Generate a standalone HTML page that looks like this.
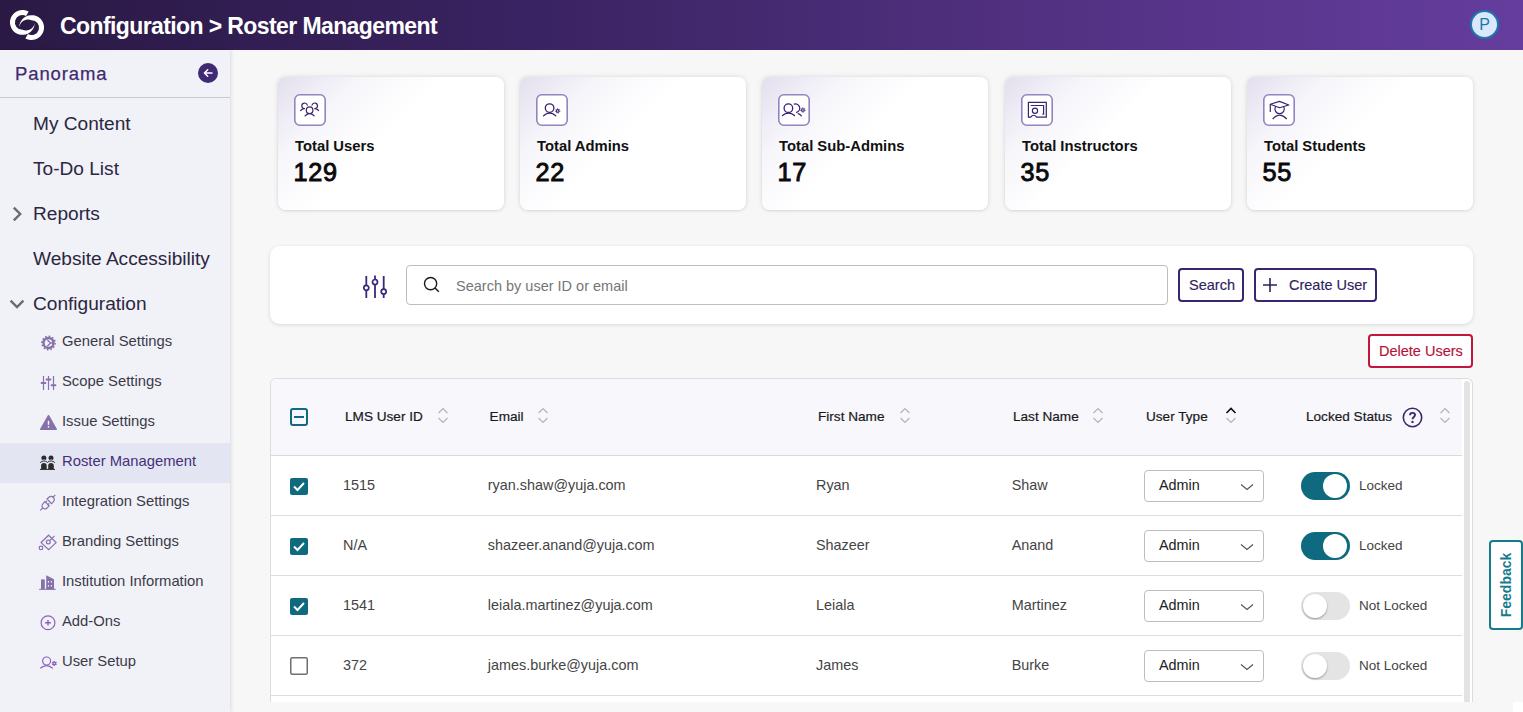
<!DOCTYPE html>
<html><head><meta charset="utf-8"><title>Roster Management</title>
<style>
*{box-sizing:border-box;margin:0;padding:0}
html,body{width:1523px;height:712px;overflow:hidden}
body{font-family:"Liberation Sans",sans-serif;background:#f7f7f7;position:relative;color:#222}
.abs{position:absolute}
.ico{position:absolute;overflow:visible}
#hdr{left:0;top:0;width:1523px;height:50px;background:linear-gradient(90deg,#2a1944 0%,#3a2362 35%,#50307f 66%,#653d9e 100%)}
#hdr .title{left:60px;top:12px;font-size:23px;font-weight:bold;color:#fff;white-space:nowrap;line-height:28px;letter-spacing:-0.6px}
#avatar{left:1470px;top:10px;width:29px;height:29px;border-radius:50%;background:#dbe8fb;border:2px solid #1b78ad;color:#1b78ad;font-size:16px;text-align:center;line-height:25px}
#side{left:0;top:50px;width:230px;height:662px;background:#f1f1f8;box-shadow:1px 0 4px rgba(0,0,0,0.12)}
.sb{position:absolute;white-space:nowrap;line-height:1}
.main{left:33px;font-size:19.1px;color:#2b2740}
.sub{left:62px;font-size:14.8px;color:#3b3a48}
.card{position:absolute;top:77px;width:226px;height:133px;border-radius:8px;background:linear-gradient(135deg,#e3dfee 0%,#f6f5fa 22%,#ffffff 45%);box-shadow:0 0 5px rgba(0,0,0,0.13),0 1px 2px rgba(0,0,0,0.06)}
.card .ib{position:absolute;left:16px;top:17px;width:32px;height:32px}
.card .ib svg{position:absolute;left:0;top:0}
.card .lbl{position:absolute;left:17px;top:60px;font-size:14.8px;font-weight:bold;color:#111;white-space:nowrap;line-height:18px}
.card .num{position:absolute;left:15.5px;top:81px;font-size:25.3px;letter-spacing:0.7px;font-weight:normal;-webkit-text-stroke:0.9px #0a0a0a;color:#0a0a0a;line-height:28px}
#panel{left:270px;top:246px;width:1203px;height:78px;background:#fff;border-radius:10px;box-shadow:0 1px 4px rgba(0,0,0,0.12)}
#search{left:406px;top:265px;width:762px;height:40px;border:1px solid #bdbdbd;border-radius:4px;background:#fff}
#search .ph{position:absolute;left:49px;top:10.5px;font-size:14.5px;color:#767676;white-space:nowrap;line-height:18px}
.btn{position:absolute;height:34px;border:2px solid #3a2670;border-radius:4px;background:#fff;color:#30245f;font-size:14.5px;line-height:31.5px;-webkit-text-stroke:0.15px currentColor;white-space:nowrap}
#tbl{left:270px;top:378px;width:1203px;height:324px;background:#fff;border:1px solid #dcdcdc;border-bottom:none;border-radius:6px 6px 0 0;overflow:hidden}
#thead{left:0;top:0;width:1191px;height:77px;background:#f7f7fc;border-bottom:1px solid #d9d9d9}
.th{position:absolute;top:30px;font-size:13.6px;color:#1a1a1a;-webkit-text-stroke:0.2px #1a1a1a;white-space:nowrap;line-height:16px}
.row{position:absolute;left:0;width:1191px;height:60px;border-bottom:1px solid #dedede}
.td{position:absolute;top:21px;font-size:14.4px;color:#444;white-space:nowrap;line-height:16px}
.dd{position:absolute;left:873px;top:14px;width:120px;height:32px;border:1px solid #bdbdbd;border-radius:4px;background:#fff}
.dd span{position:absolute;left:14px;top:6px;font-size:14.4px;color:#222;line-height:16px}
.tg{position:absolute;left:1030px;top:16px;width:49px;height:28px;border-radius:14px}
.tg.on{background:#0f6a80}
.tg.off{background:#e4e4e4}
.knob{position:absolute;top:2px;width:24px;height:24px;border-radius:50%;background:#fff}
.tg.on .knob{left:21.5px}
.tg.off .knob{left:2px;box-shadow:0 1px 2px rgba(0,0,0,0.35)}
.lk{position:absolute;left:1088px;top:22px;font-size:13.5px;color:#444;line-height:16px;white-space:nowrap}
#scroll{left:1193px;top:2px;width:6px;height:330px;background:#e3e3e3;border-radius:3px}
#fb{left:1489px;top:540px;width:34px;height:90px;border:2px solid #157a8c;border-radius:4px;background:#fff}
#fb span{position:absolute;left:50%;top:50%;transform:translate(-50%,-50%) rotate(-90deg);font-size:14px;font-weight:bold;color:#157a8c;white-space:nowrap}
</style></head>
<body>
<div id="hdr" class="abs">
<svg class="ico" style="left:0;top:0" width="50" height="50" viewBox="0 0 50 50">
<path id="lg" d="M28.6 11.62 A12.45 12.45 0 1 0 34.85 22.4 A9 9 0 0 1 22.4 29.85 A7.45 7.45 0 1 1 26.1 15.95 Z" fill="#fff"/>
<path d="M28.6 11.62 A12.45 12.45 0 1 0 34.85 22.4 A9 9 0 0 1 22.4 29.85 A7.45 7.45 0 1 1 26.1 15.95 Z" fill="#fff" transform="rotate(180 27 25)"/>
</svg>
<div class="abs title">Configuration &gt; Roster Management</div>
<div id="avatar" class="abs">P</div>
</div>
<div id="side" class="abs">
<div class="sb" style="left:15px;top:15px;font-size:18.5px;color:#3f2b6e;letter-spacing:0.9px;-webkit-text-stroke:0.25px #3f2b6e">Panorama</div>
<div class="abs" style="left:197.5px;top:12.5px;width:20px;height:20px;border-radius:50%;background:#3f2a73">
<svg width="20" height="20" viewBox="0 0 20 20"><path d="M14 10 H6.4 M9.7 6.7 L6.4 10 L9.7 13.3" fill="none" stroke="#fff" stroke-width="1.5" stroke-linecap="round" stroke-linejoin="round"/></svg>
</div>
<div class="abs" style="left:0;top:47px;width:230px;height:1px;background:#c9c8da"></div>
</div>
<div class="sb main" style="top:114.3px">My Content</div>
<div class="sb main" style="top:158.5px">To-Do List</div>
<div class="sb main" style="top:203.7px">Reports</div>
<div class="sb main" style="top:248.6px">Website Accessibility</div>
<div class="sb main" style="top:294.1px">Configuration</div>
<svg class="ico" style="left:11px;top:206px" width="12" height="16" viewBox="0 0 12 16"><path d="M2.8 1.6 L9.2 8 L2.8 14.4" fill="none" stroke="#6b6b6b" stroke-width="2.4"/></svg>
<svg class="ico" style="left:9px;top:298px" width="16" height="12" viewBox="0 0 16 12"><path d="M1.6 2.6 L8 9 L14.4 2.6" fill="none" stroke="#6b6b6b" stroke-width="2.4"/></svg>
<div class="abs" style="left:0;top:443px;width:230px;height:40px;background:#e3e5f3"></div>
<svg class="ico" style="left:36px;top:330px" width="24" height="24" viewBox="0 0 24 24"><g fill="none" stroke="#8672aa"><circle cx="12.5" cy="13" r="5" stroke-width="2.4"/><circle cx="12.5" cy="13" r="6.6" stroke-width="1.6" stroke-dasharray="1.6 1.85"/></g><path d="M11.3 9.8 L14.5 13 L11.3 16.2 M14.5 13 H17" fill="none" stroke="#8672aa" stroke-width="1.3"/></svg>
<div class="sb sub" style="top:333.9px">General Settings</div>
<svg class="ico" style="left:36px;top:370px" width="24" height="24" viewBox="0 0 24 24"><g stroke="#8672aa" stroke-width="1.2"><path d="M7.5 6 V20 M12.5 6 V20 M17.5 6 V20"/></g><g stroke="#8672aa" stroke-width="2" stroke-linecap="round"><path d="M5.6 13.1 H9.4 M10.6 9.6 H14.4 M15.6 15.3 H19.4"/></g></svg>
<div class="sb sub" style="top:373.9px">Scope Settings</div>
<svg class="ico" style="left:36px;top:410px" width="24" height="24" viewBox="0 0 24 24"><path d="M12.5 5.5 L20.3 19.4 H4.7 Z" fill="#8672aa" stroke="#8672aa" stroke-width="1.4" stroke-linejoin="round"/><path d="M12.5 10.8 V14.8" stroke="#fff" stroke-width="1.4"/><circle cx="12.5" cy="16.9" r="0.8" fill="#fff"/></svg>
<div class="sb sub" style="top:413.9px">Issue Settings</div>
<svg class="ico" style="left:36px;top:450px" width="24" height="24" viewBox="0 0 24 24"><g fill="#2b2b2e"><circle cx="7.9" cy="8" r="2.5"/><circle cx="15" cy="8" r="2.5"/><path d="M5.1 19.2 V15.8 A2.8 2.8 0 0 1 10.7 15.8 V19.2Z M12.2 19.2 V15.8 A2.8 2.8 0 0 1 17.8 15.8 V19.2Z"/><path d="M4 18.9 H19 V19.9 H4Z"/></g><path d="M4.1 12.7 Q7.8 9.3 11.5 12.4 Q15.2 9.3 18.9 12.7" fill="none" stroke="#e3e5f3" stroke-width="2.6"/><path d="M4.1 12.7 Q7.8 9.3 11.5 12.4 Q15.2 9.3 18.9 12.7" fill="none" stroke="#2b2b2e" stroke-width="1"/></svg>
<div class="sb sub" style="top:453.9px;color:#46307a">Roster Management</div>
<svg class="ico" style="left:36px;top:490px" width="24" height="24" viewBox="0 0 24 24"><g fill="none" stroke="#8672aa" stroke-width="1.2"><path d="M4.3 20.3 L6.8 17.8 M16.6 7.6 L19.3 4.9"/><path d="M7 13.7 C5.5 15.2 5.8 17.3 7.2 18.2 C8.3 19.2 10.1 19.1 11.2 17.8 L13.2 15.8 L8.9 11.6 Z"/><path d="M11 9 L15.5 13.7 L17.3 11.9 C18.6 10.6 18.6 8.5 17.3 7.3 C16.1 6 14.2 6 12.9 7.2 Z"/><path d="M9.1 12.7 L10.8 11 M11.5 15 L13.2 13.3"/></g></svg>
<div class="sb sub" style="top:493.9px">Integration Settings</div>
<svg class="ico" style="left:36px;top:530px" width="24" height="24" viewBox="0 0 24 24"><g fill="none" stroke="#8672aa" stroke-width="1.2"><path d="M12.6 5.2 L20.1 12.6 L12.6 19.6 L5.1 12.6 Z"/><circle cx="12.3" cy="12" r="1.9"/><path d="M13.6 10.7 L18.5 5.8"/><circle cx="5" cy="17.9" r="1.8"/></g></svg>
<div class="sb sub" style="top:533.9px">Branding Settings</div>
<svg class="ico" style="left:36px;top:570px" width="24" height="24" viewBox="0 0 24 24"><g fill="#8672aa"><path d="M5 9.4 H8.8 V19.4 H5Z"/><path d="M10.2 5.3 L18 9.2 V19.4 H10.2Z"/><path d="M3.1 18.8 H19.8 V19.8 H3.1Z"/></g><g fill="#f1f1f8"><rect x="11.9" y="11" width="1.1" height="1.6"/><rect x="14.8" y="11" width="1.1" height="1.6"/><rect x="11.9" y="15" width="1.1" height="1.6"/><rect x="14.8" y="15" width="1.1" height="1.6"/></g></svg>
<div class="sb sub" style="top:573.9px">Institution Information</div>
<svg class="ico" style="left:36px;top:610px" width="24" height="24" viewBox="0 0 24 24"><g fill="none" stroke="#8c62bb" stroke-width="1.2"><circle cx="12" cy="12.8" r="6.9"/><path d="M12 10 V15.6 M9.1 12.8 H14.9" stroke-width="1.4"/></g></svg>
<div class="sb sub" style="top:613.9px">Add-Ons</div>
<svg class="ico" style="left:36px;top:650px" width="24" height="24" viewBox="0 0 24 24"><g fill="none" stroke="#8c62bb" stroke-width="1.2"><circle cx="10.6" cy="11" r="4"/><path d="M4.3 18.3 Q10.6 12.8 16.8 18.3"/><circle cx="18.3" cy="13.4" r="1.3" stroke-width="1.4"/></g><g fill="#8c62bb"><circle cx="18.3" cy="11.4" r="0.7"/><circle cx="18.3" cy="15.4" r="0.7"/><circle cx="16.6" cy="12.4" r="0.7"/><circle cx="20" cy="12.4" r="0.7"/><circle cx="16.6" cy="14.4" r="0.7"/><circle cx="20" cy="14.4" r="0.7"/></g></svg>
<div class="sb sub" style="top:653.9px">User Setup</div>
<div class="card" style="left:278px"><div class="ib"><svg width="32" height="32" viewBox="0 0 32 32"><rect x="0.8" y="0.8" width="30.4" height="30.4" rx="5" fill="#fff" stroke="#9484bf" stroke-width="1.6"/><g fill="none" stroke="#3b2372" stroke-width="1.2" stroke-linecap="round"><circle cx="15.6" cy="16.2" r="3.3"/><path d="M11.2 21.8 Q15.6 17.6 20.1 21.8"/><path d="M13.3 11.1 A2.8 2.8 0 1 0 10.4 14.6"/><path d="M18 11.1 A2.8 2.8 0 1 1 20.9 14.6"/><path d="M6.7 16.5 Q8 14.9 10 14.6 M24.6 16.5 Q23.3 14.9 21.3 14.6"/></g></svg></div><div class="lbl">Total Users</div><div class="num">129</div></div>
<div class="card" style="left:520px"><div class="ib"><svg width="32" height="32" viewBox="0 0 32 32"><rect x="0.8" y="0.8" width="30.4" height="30.4" rx="5" fill="#fff" stroke="#9484bf" stroke-width="1.6"/><g fill="none" stroke="#3b2372" stroke-width="1.3" stroke-linecap="round"><circle cx="13.6" cy="14.1" r="4.3"/><path d="M7.6 21.7 Q13.6 16.4 19.7 21.7"/></g><circle cx="21.7" cy="16.9" r="1.3" fill="none" stroke="#3b2372" stroke-width="1.1"/><circle cx="21.7" cy="16.9" r="2.2" fill="none" stroke="#3b2372" stroke-width="0.9" stroke-dasharray="0.9 0.85"/></svg></div><div class="lbl">Total Admins</div><div class="num">22</div></div>
<div class="card" style="left:762px"><div class="ib"><svg width="32" height="32" viewBox="0 0 32 32"><rect x="0.8" y="0.8" width="30.4" height="30.4" rx="5" fill="#fff" stroke="#9484bf" stroke-width="1.6"/><g fill="none" stroke="#3b2372" stroke-width="1.3" stroke-linecap="round"><circle cx="10.4" cy="14.2" r="4.3"/><path d="M4.5 21.6 Q10.4 16.4 16.5 21.6"/><path d="M16.3 10.1 A4.2 4.2 0 0 1 18.6 18.3"/><path d="M20.2 19.6 Q22.2 20.3 23.3 21.8"/></g><circle cx="24.9" cy="16" r="1.3" fill="none" stroke="#3b2372" stroke-width="1.1"/><circle cx="24.9" cy="16" r="2.2" fill="none" stroke="#3b2372" stroke-width="0.9" stroke-dasharray="0.9 0.85"/></svg></div><div class="lbl">Total Sub-Admins</div><div class="num">17</div></div>
<div class="card" style="left:1005px"><div class="ib"><svg width="32" height="32" viewBox="0 0 32 32"><rect x="0.8" y="0.8" width="30.4" height="30.4" rx="5" fill="#fff" stroke="#9484bf" stroke-width="1.6"/><g fill="none" stroke="#3b2372" stroke-width="1.2"><path d="M9.8 23.2 H7.4 V8.3 H25.3 V23.2 H15.6"/><path d="M10.2 11.8 V11.5 H22.6 V20.2 H21.4"/><circle cx="14" cy="16.8" r="2.6"/><path d="M9.5 23.3 Q12.7 19.2 15.8 23.3"/></g></svg></div><div class="lbl">Total Instructors</div><div class="num">35</div></div>
<div class="card" style="left:1247px"><div class="ib"><svg width="32" height="32" viewBox="0 0 32 32"><rect x="0.8" y="0.8" width="30.4" height="30.4" rx="5" fill="#fff" stroke="#9484bf" stroke-width="1.6"/><g transform="translate(1.3 0.7)" fill="none" stroke="#3b2372" stroke-width="1.2" stroke-linejoin="round"><path d="M6 9.5 L15.2 6.7 L24.5 10.3 L15.2 13.1 Z" fill="#fff"/><path d="M6 9.6 V17.4"/><path d="M11.2 12 A4.7 4.7 0 1 0 19.4 12"/><path d="M8.4 24.3 Q15.5 16.5 22.4 24.3"/></g></svg></div><div class="lbl">Total Students</div><div class="num">55</div></div>
<div id="panel" class="abs"></div>
<svg class="ico" style="left:362px;top:274px" width="26" height="25" viewBox="0 0 26 25">
<g fill="none" stroke="#3b2878" stroke-width="1.8"><path d="M4.3 2 V24 M13 1.5 V24 M21.7 2 V24"/></g>
<g fill="#fff" stroke="#3b2878" stroke-width="1.7"><circle cx="4.3" cy="13.8" r="2.5"/><circle cx="13" cy="8" r="2.5"/><circle cx="21.7" cy="17.6" r="2.5"/></g>
</svg>
<div id="search" class="abs">
<svg class="ico" style="left:16px;top:10px" width="18" height="18" viewBox="0 0 18 18"><circle cx="7.6" cy="7.6" r="6.1" fill="none" stroke="#1a1a1a" stroke-width="1.4"/><path d="M12 12 L15.8 15.8" stroke="#1a1a1a" stroke-width="1.5"/></svg>
<div class="ph">Search by user ID or email</div>
</div>
<div class="btn" style="left:1178px;top:268px;width:66px;padding-left:9px">Search</div>
<div class="btn" style="left:1254px;top:268px;width:123px;padding-left:33px"><svg class="ico" style="left:6px;top:7px" width="16" height="16" viewBox="0 0 16 16"><path d="M8 1 V15 M1 8 H15" stroke="#2f2260" stroke-width="1.6"/></svg>Create User</div>
<div class="btn" style="left:1368px;top:334px;width:105px;padding-left:9px;border-color:#c4163c;color:#b5123a">Delete Users</div>
<div id="tbl" class="abs">
<div id="thead" class="abs">
<svg class="ico" style="left:19px;top:29px" width="18" height="18" viewBox="0 0 18 18"><rect x="1" y="1" width="16" height="16" rx="2" fill="none" stroke="#0f6a80" stroke-width="2"/><path d="M4 9 H14" stroke="#0f6a80" stroke-width="2"/></svg>
<div class="th" style="left:74px">LMS User ID</div><div class="th" style="left:218.6px">Email</div><div class="th" style="left:547px">First Name</div><div class="th" style="left:742px">Last Name</div><div class="th" style="left:875px">User Type</div><div class="th" style="left:1035px">Locked Status</div><svg class="ico" style="left:165.5px;top:28px" width="12" height="17" viewBox="0 0 12 17"><path d="M1.5 6 L6 1.5 L10.5 6" fill="none" stroke="#b5b5b5" stroke-width="1.2"/><path d="M1.5 11 L6 15.5 L10.5 11" fill="none" stroke="#b5b5b5" stroke-width="1.2"/></svg><svg class="ico" style="left:266.0px;top:28px" width="12" height="17" viewBox="0 0 12 17"><path d="M1.5 6 L6 1.5 L10.5 6" fill="none" stroke="#b5b5b5" stroke-width="1.2"/><path d="M1.5 11 L6 15.5 L10.5 11" fill="none" stroke="#b5b5b5" stroke-width="1.2"/></svg><svg class="ico" style="left:627.5px;top:28px" width="12" height="17" viewBox="0 0 12 17"><path d="M1.5 6 L6 1.5 L10.5 6" fill="none" stroke="#b5b5b5" stroke-width="1.2"/><path d="M1.5 11 L6 15.5 L10.5 11" fill="none" stroke="#b5b5b5" stroke-width="1.2"/></svg><svg class="ico" style="left:821.0px;top:28px" width="12" height="17" viewBox="0 0 12 17"><path d="M1.5 6 L6 1.5 L10.5 6" fill="none" stroke="#b5b5b5" stroke-width="1.2"/><path d="M1.5 11 L6 15.5 L10.5 11" fill="none" stroke="#b5b5b5" stroke-width="1.2"/></svg><svg class="ico" style="left:953.5px;top:28px" width="12" height="17" viewBox="0 0 12 17"><path d="M1.5 6 L6 1.5 L10.5 6" fill="none" stroke="#111" stroke-width="1.6"/><path d="M1.5 11 L6 15.5 L10.5 11" fill="none" stroke="#b5b5b5" stroke-width="1.2"/></svg><svg class="ico" style="left:1167.5px;top:28px" width="12" height="17" viewBox="0 0 12 17"><path d="M1.5 6 L6 1.5 L10.5 6" fill="none" stroke="#b5b5b5" stroke-width="1.2"/><path d="M1.5 11 L6 15.5 L10.5 11" fill="none" stroke="#b5b5b5" stroke-width="1.2"/></svg><svg class="ico" style="left:1130.5px;top:27.5px" width="21" height="21" viewBox="0 0 21 21"><circle cx="10.5" cy="10.5" r="9.2" fill="none" stroke="#3a2670" stroke-width="1.6"/><path d="M8 8.3 C8 6.8 9.1 5.9 10.5 5.9 C11.9 5.9 13 6.8 13 8.1 C13 9.8 10.5 10.1 10.5 12.2" fill="none" stroke="#3a2670" stroke-width="1.9"/><circle cx="10.5" cy="14.9" r="1.2" fill="#3a2670"/></svg>
</div>
<div class="row" style="top:77px"><svg class="ico" style="left:19px;top:22px" width="18" height="17" viewBox="0 0 18 17"><rect x="0" y="0" width="18" height="17" rx="2" fill="#0f6a80"/><path d="M4 8.5 L7.5 12 L14 5" fill="none" stroke="#fff" stroke-width="2"/></svg><div class="td" style="left:72px">1515</div><div class="td" style="left:216.8px">ryan.shaw@yuja.com</div><div class="td" style="left:545px">Ryan</div><div class="td" style="left:740.7px">Shaw</div><div class="dd"><span>Admin</span><svg class="ico" style="left:95px;top:12px" width="14" height="8" viewBox="0 0 14 8"><path d="M1 1.5 L7 6.5 L13 1.5" fill="none" stroke="#555" stroke-width="1.2"/></svg></div><div class="tg on"><div class="knob"></div></div><div class="lk">Locked</div></div>
<div class="row" style="top:137px"><svg class="ico" style="left:19px;top:22px" width="18" height="17" viewBox="0 0 18 17"><rect x="0" y="0" width="18" height="17" rx="2" fill="#0f6a80"/><path d="M4 8.5 L7.5 12 L14 5" fill="none" stroke="#fff" stroke-width="2"/></svg><div class="td" style="left:72px">N/A</div><div class="td" style="left:216.8px">shazeer.anand@yuja.com</div><div class="td" style="left:545px">Shazeer</div><div class="td" style="left:740.7px">Anand</div><div class="dd"><span>Admin</span><svg class="ico" style="left:95px;top:12px" width="14" height="8" viewBox="0 0 14 8"><path d="M1 1.5 L7 6.5 L13 1.5" fill="none" stroke="#555" stroke-width="1.2"/></svg></div><div class="tg on"><div class="knob"></div></div><div class="lk">Locked</div></div>
<div class="row" style="top:197px"><svg class="ico" style="left:19px;top:22px" width="18" height="17" viewBox="0 0 18 17"><rect x="0" y="0" width="18" height="17" rx="2" fill="#0f6a80"/><path d="M4 8.5 L7.5 12 L14 5" fill="none" stroke="#fff" stroke-width="2"/></svg><div class="td" style="left:72px">1541</div><div class="td" style="left:216.8px">leiala.martinez@yuja.com</div><div class="td" style="left:545px">Leiala</div><div class="td" style="left:740.7px">Martinez</div><div class="dd"><span>Admin</span><svg class="ico" style="left:95px;top:12px" width="14" height="8" viewBox="0 0 14 8"><path d="M1 1.5 L7 6.5 L13 1.5" fill="none" stroke="#555" stroke-width="1.2"/></svg></div><div class="tg off"><div class="knob"></div></div><div class="lk">Not Locked</div></div>
<div class="row" style="top:257px"><svg class="ico" style="left:19px;top:21px" width="18" height="18" viewBox="0 0 18 18"><rect x="0.75" y="0.75" width="16.5" height="16.5" rx="1.5" fill="#fff" stroke="#6f6f6f" stroke-width="1.5"/></svg><div class="td" style="left:72px">372</div><div class="td" style="left:216.8px">james.burke@yuja.com</div><div class="td" style="left:545px">James</div><div class="td" style="left:740.7px">Burke</div><div class="dd"><span>Admin</span><svg class="ico" style="left:95px;top:12px" width="14" height="8" viewBox="0 0 14 8"><path d="M1 1.5 L7 6.5 L13 1.5" fill="none" stroke="#555" stroke-width="1.2"/></svg></div><div class="tg off"><div class="knob"></div></div><div class="lk">Not Locked</div></div>
<div class="row" style="top:317px"></div>
<div id="scroll" class="abs"></div>
</div>
<div class="abs" style="left:1513px;top:702px;width:10px;height:10px;background:#fff"></div>
<div id="fb" class="abs"><span>Feedback</span></div>
</body></html>
